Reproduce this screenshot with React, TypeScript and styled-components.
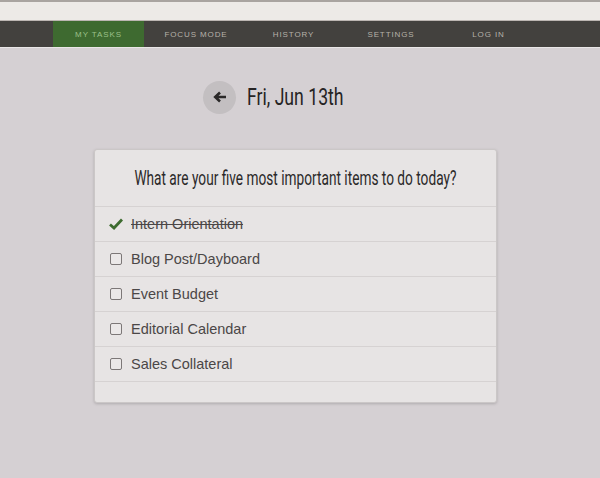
import styled, { createGlobalStyle } from 'styled-components'

const GlobalStyle = createGlobalStyle`
  html, body {
    margin: 0;
    padding: 0;
    background: #d5d0d3;
  }
  body {
    font-family: 'Liberation Sans', Arial, sans-serif;
  }
`

const Page = styled.div`
  width: 600px;
  min-height: 478px;
  background: #d5d0d3;
`

const TopStrip = styled.div`
  height: 18px;
  background: #edeae7;
  border-top: 2px solid #a9a4a0;
  border-bottom: 1px solid #bcb6b2;
`

const NavBar = styled.nav`
  display: flex;
  gap: 6.5px;
  height: 26px;
  padding-left: 53px;
  background: #43413e;
  border-bottom: 1px solid #e9e6e6;
`

const Tab = styled.a<{ $active?: boolean }>`
  display: flex;
  align-items: center;
  justify-content: center;
  width: 91px;
  padding-top: 1px;
  font-size: 8px;
  letter-spacing: 0.9px;
  text-transform: uppercase;
  color: ${(p) => (p.$active ? '#9cc089' : '#b6b1a9')};
  background: ${(p) => (p.$active ? '#3e6a30' : 'transparent')};
`

const DateRow = styled.div`
  display: flex;
  align-items: center;
  gap: 11px;
  padding: 33px 0 0 203px;
  height: 32px;
`

const BackButton = styled.div`
  width: 33px;
  height: 33px;
  border-radius: 50%;
  background: #c3bfc1;
  display: flex;
  align-items: center;
  justify-content: center;
`

// narrow headline face: no condensed font is installed, so squeeze Roboto
const Narrow = styled.span<{ $scale: number; $origin?: string }>`
  display: inline-block;
  font-family: Roboto, sans-serif;
  font-weight: normal;
  transform: scaleX(${(p) => p.$scale});
  transform-origin: ${(p) => p.$origin ?? 'center'};
  white-space: nowrap;
`

const DateTitle = styled.h1`
  margin: 0;
  font-size: 24px;
  font-weight: normal;
  color: #262424;
`

const Card = styled.section`
  margin: 36px 0 0 94px;
  width: 401px;
  background: #e7e4e4;
  border: 1px solid #cbc7c7;
  border-radius: 3px;
  box-shadow: 0 1px 3px rgba(0, 0, 0, 0.18);
  overflow: hidden;
`

const Question = styled.h2`
  margin: 0;
  height: 56px;
  display: flex;
  align-items: center;
  justify-content: center;
  font-size: 20px;
  font-weight: normal;
  color: #2b2929;
  border-bottom: 1px solid #d6d2d2;
`

const Row = styled.div`
  display: flex;
  align-items: center;
  gap: 10px;
  height: 34px;
  padding-left: 14px;
  border-bottom: 1px solid #d6d2d2;
`

const Box = styled.span`
  width: 10px;
  height: 10px;
  margin-left: 1px;
  border: 1px solid #7c7777;
  border-radius: 2px;
  background: #ebe8e8;
`

const Label = styled.span<{ $done?: boolean }>`
  font-size: 14.5px;
  color: #4b4747;
  text-decoration: ${(p) => (p.$done ? 'line-through' : 'none')};
  margin-left: ${(p) => (p.$done ? '-2px' : '-1px')};
`

const Footer = styled.div`
  height: 20px;
`

const Check = () => (
  <svg width="14" height="12" viewBox="0 0 14 12">
    <path d="M1 6.5 L5 10 L13 1.5" fill="none" stroke="#3d6b2f" strokeWidth="2.8" />
  </svg>
)

const Arrow = () => (
  <svg width="14" height="12" viewBox="0 0 14 12">
    <path d="M13 6 H3 M7 1.5 L2.2 6 L7 10.5" fill="none" stroke="#2a2828" strokeWidth="2.6" />
  </svg>
)

const tasks = [
  { text: 'Intern Orientation', done: true },
  { text: 'Blog Post/Dayboard', done: false },
  { text: 'Event Budget', done: false },
  { text: 'Editorial Calendar', done: false },
  { text: 'Sales Collateral', done: false },
]

const tabs = ['My Tasks', 'Focus Mode', 'History', 'Settings', 'Log In']

export default function App() {
  return (
    <Page>
      <GlobalStyle />
      <TopStrip />
      <NavBar>
        {tabs.map((t, i) => (
          <Tab key={t} $active={i === 0}>
            {t}
          </Tab>
        ))}
      </NavBar>
      <DateRow>
        <BackButton>
          <Arrow />
        </BackButton>
        <DateTitle>
          <Narrow $scale={0.735} $origin="left">Fri, Jun 13th</Narrow>
        </DateTitle>
      </DateRow>
      <Card>
        <Question>
          <Narrow $scale={0.684}>What are your five most important items to do today?</Narrow>
        </Question>
        {tasks.map((task) => (
          <Row key={task.text}>
            {task.done ? <Check /> : <Box />}
            <Label $done={task.done}>{task.text}</Label>
          </Row>
        ))}
        <Footer />
      </Card>
    </Page>
  )
}
